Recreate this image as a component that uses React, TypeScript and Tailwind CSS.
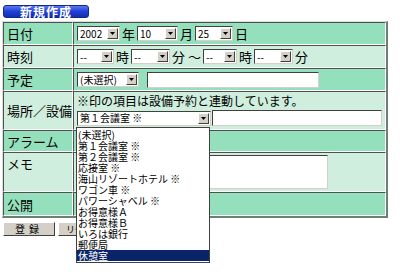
import React from 'react';

const font = { fontFamily: '"Noto Sans CJK JP", "Noto Sans", sans-serif' };

// dark top-left, light bottom-right — like an old table cell
const cell =
  'border border-t-[#505050] border-l-[#505050] border-b-white border-r-white flex items-center';
const dark = 'bg-[#94dfbc]';
const light = 'bg-[#cfeedd]';

function Arrow() {
  return (
    <span className="w-[11px] h-[11px] mr-[1px] bg-[#d4d0c8] border border-t-white border-l-white border-b-[#404040] border-r-[#404040] flex items-center justify-center shrink-0">
      <svg width="5" height="3" viewBox="0 0 5 3">
        <path d="M0 0h5L2.5 3z" fill="#000" />
      </svg>
    </span>
  );
}

function Select({ w, text }: { w: string; text: string }) {
  return (
    <span
      className={`${w} h-[15px] bg-white border border-t-[#404040] border-l-[#404040] border-b-[#d4d0c8] border-r-[#d4d0c8] flex items-center justify-between shrink-0`}
    >
      <span className="pl-[2px] text-[10px] leading-none whitespace-nowrap">{text}</span>
      <Arrow />
    </span>
  );
}

function Input({ w }: { w: string }) {
  return (
    <span
      className={`${w} h-[16px] bg-white border border-t-[#404040] border-l-[#404040] border-b-[#d4d0c8] border-r-[#d4d0c8] shrink-0`}
    />
  );
}

const places = [
  '(未選択)',
  '第１会議室 ※',
  '第２会議室 ※',
  '応接室 ※',
  '海山リゾートホテル ※',
  'ワゴン車 ※',
  'パワーシャベル ※',
  'お得意様Ａ',
  'お得意様Ｂ',
  'いろは銀行',
  '郵便局',
  '休憩室',
];

export default function App() {
  return (
    <div className="relative w-[400px] h-[278px] bg-white text-black" style={font}>
      {/* title */}
      <div className="pt-[5px] pl-[3px]">
        <div className="w-[86px] h-[13px] rounded-[3px] bg-gradient-to-b from-[#5a78f0] via-[#1f3fd8] to-[#1530a8] border border-[#102890] flex items-center justify-center text-white text-[12px] font-bold leading-none tracking-[1px]">
          新規作成
        </div>
      </div>

      {/* form table */}
      <div className="mt-[3px] ml-[2px] w-[386px] border-t border-l border-t-[#dcdcdc] border-l-[#dcdcdc] border-r-2 border-b-2 border-r-[#6f7f77] border-b-[#6f7f77] grid grid-cols-[70px_1fr] text-[13px] leading-none">
        <div className={`${cell} ${dark} h-[23px] pl-[3px]`}>日付</div>
        <div className={`${cell} ${dark} h-[23px] pl-[3px] gap-[2px]`}>
          <Select w="w-[43px]" text="2002" />
          <span>年</span>
          <Select w="w-[41px]" text="10" />
          <span>月</span>
          <Select w="w-[38px]" text="25" />
          <span>日</span>
        </div>

        <div className={`${cell} ${light} h-[23px] pl-[3px]`}>時刻</div>
        <div className={`${cell} ${light} h-[23px] pl-[3px] gap-[2px]`}>
          <Select w="w-[37px]" text="--" />
          <span>時</span>
          <Select w="w-[39px]" text="--" />
          <span>分 〜</span>
          <Select w="w-[34px]" text="--" />
          <span>時</span>
          <Select w="w-[39px]" text="--" />
          <span>分</span>
        </div>

        <div className={`${cell} ${dark} h-[23px] pl-[3px]`}>予定</div>
        <div className={`${cell} ${dark} h-[23px] pl-[3px] gap-[8px]`}>
          <Select w="w-[62px]" text="(未選択)" />
          <Input w="w-[172px]" />
        </div>

        <div className={`${cell} ${light} h-[39px] pl-[3px]`}>場所／設備</div>
        <div className={`${cell} ${light} h-[39px] pl-[3px] flex-col !items-start justify-center gap-[3px]`}>
          <span className="text-[12px] leading-[12px]">※印の項目は設備予約と連動しています。</span>
          <div className="flex items-center gap-[1px]">
            <Select w="w-[134px]" text="第１会議室 ※" />
            <Input w="w-[170px]" />
          </div>
        </div>

        <div className={`${cell} ${dark} h-[22px] pl-[3px]`}>アラーム</div>
        <div className={`${cell} ${dark} h-[22px]`} />

        <div className={`${cell} ${light} h-[40px] pl-[3px] !items-start pt-[4px]`}>メモ</div>
        <div className={`${cell} ${light} h-[40px] pl-[2px]`}>
          <span className="w-[252px] h-[34px] bg-white border border-t-[#404040] border-l-[#404040] border-b-[#d4d0c8] border-r-[#d4d0c8]" />
        </div>

        <div className={`${cell} ${dark} h-[24px] pl-[3px]`}>公開</div>
        <div className={`${cell} ${dark} h-[24px]`} />
      </div>

      {/* buttons */}
      <div className="mt-[4px] ml-[3px] flex gap-[3px]">
        <button className="w-[52px] h-[14px] bg-[#d4d0c8] border border-t-white border-l-white border-b-[#404040] border-r-[#404040] text-[10px] leading-none tracking-[4px]">
          登録
        </button>
        <button className="w-[52px] h-[14px] bg-[#d4d0c8] border border-t-white border-l-white border-b-[#404040] border-r-[#404040] text-[9px] leading-none whitespace-nowrap">
          リセット
        </button>
      </div>

      {/* open dropdown list */}
      <div className="absolute left-[76px] top-[127px] w-[134px] bg-white border border-[#404040] text-[10px] leading-[11px] py-[1px]">
        {places.map((p) => (
          <div
            key={p}
            className={`h-[11px] pl-[1px] whitespace-nowrap ${
              p === '休憩室' ? 'bg-[#0a246a] text-white' : ''
            }`}
          >
            {p}
          </div>
        ))}
      </div>
    </div>
  );
}
